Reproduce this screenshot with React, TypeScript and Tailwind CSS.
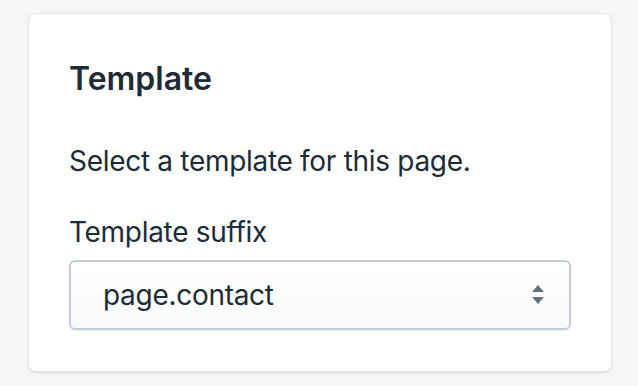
export default function App() {
    return (
        <div className="min-h-screen w-full bg-[#f4f6f8] pt-[13px] pl-[28px] font-['Inter',sans-serif] text-[#212b36]">
            <div className="w-[584px] h-[359px] rounded-[8px] bg-white border border-[#e4e8ec] shadow-[0_1px_2px_rgba(63,63,68,0.15)] px-[40px] pt-[45px]">
                <h2 className="text-[32px] leading-[40px] font-semibold">Template</h2>
                <p className="mt-[42px] text-[28px] leading-[40px] tracking-[-0.3px]">Select a template for this page.</p>
                <label className="block mt-[31px] text-[28px] leading-[40px] tracking-[-0.3px]">Template suffix</label>
                <div className="mt-[8px] flex items-center justify-between w-[502px] h-[70px] rounded-[6px] border-2 border-[#c4cdd5] bg-gradient-to-b from-white to-[#f9fafb] pl-[32px] pr-[24px] shadow-[0_1px_0_rgba(22,29,37,0.05)]">
                    <span className="text-[28px] tracking-[-0.3px]">page.contact</span>
                    <svg width="14" height="20" viewBox="0 0 14 20" fill="#637381">
                        <path d="M7 0 L13 7 L1 7 Z" />
                        <path d="M1 12 L13 12 L7 19 Z" />
                    </svg>
                </div>
            </div>
        </div>
    )
}
